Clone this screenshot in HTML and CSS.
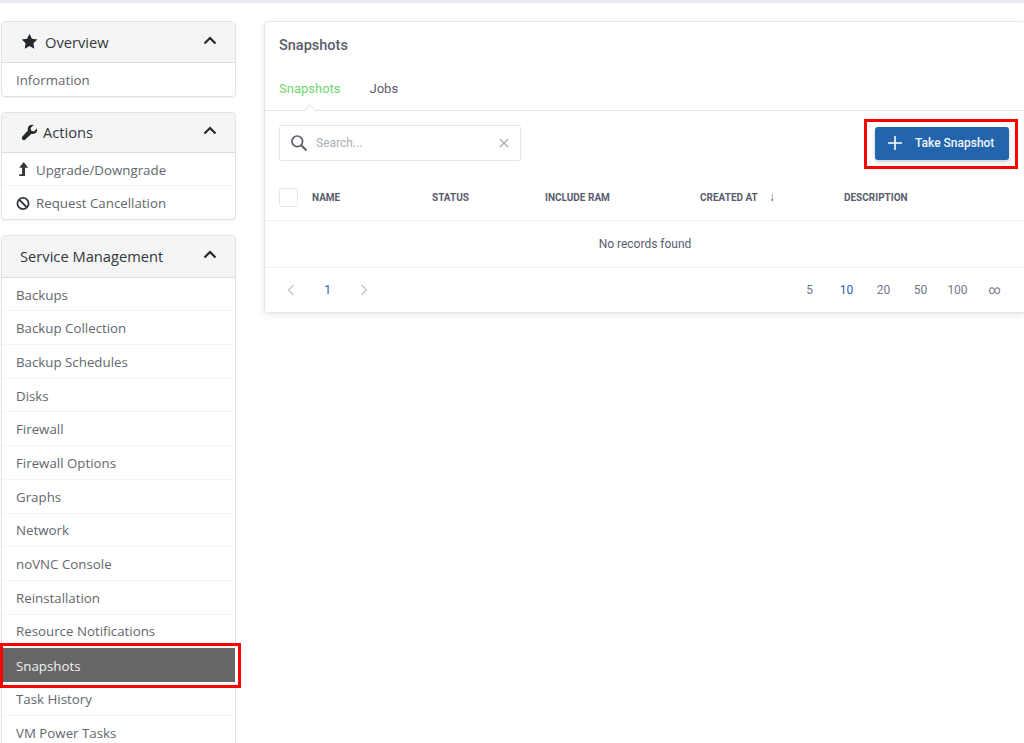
FILE: index.html
```html
<!DOCTYPE html>
<html lang="en">
<head>
  <meta charset="UTF-8" />
  <title>Snapshots</title>
  <link rel="stylesheet" href="styles.css">
</head>
<body>
  <div class="top-line"></div>
  <div class="page">
    <aside class="sidebar">
      <div class="panel">
        <div class="panel-head">
          <span class="head-title">
            <svg class="head-icon" viewBox="0 0 24 24"><path fill="#23282e" d="M12 1l3.400 7 7.600 1.100-5.500 5.400 1.300 7.600-6.800-3.600-6.800 3.600 1.300-7.600L1 9.100 8.600 8z"/></svg>
            Overview
          </span>
          <svg class="chevron" viewBox="0 0 14 9"><path d="M1.500 7.500L7 2l5.500 5.500" fill="none" stroke="#23282e" stroke-width="2.200"/></svg>
        </div>
        <a class="item">Information</a>
      </div>

      <div class="panel panel-short">
        <div class="panel-head">
          <span class="head-title head-tight">
            <svg class="head-icon" viewBox="0 0 24 24"><path fill="#23282e" d="M22.500 6.200l-4.300 4.300-3.700-1-1-3.700 4.300-4.300c-3-.9-6.300.3-7.700 3-.8 1.500-.8 3.300-.3 4.800L2 17.800c-1.200 1.200-1.200 3 0 4.200s3 1.200 4.200 0l8.500-8.300c1.500.5 3.300.5 4.800-.3 2.700-1.400 3.900-4.700 3-7.200z"/></svg>
            Actions
          </span>
          <svg class="chevron" viewBox="0 0 14 9"><path d="M1.500 7.500L7 2l5.500 5.500" fill="none" stroke="#23282e" stroke-width="2.200"/></svg>
        </div>
        <a class="item">
          <svg class="item-icon" viewBox="0 0 14 16"><path fill="#33383e" d="M7.700 0l4.800 6.200H9.200V15H3v-2h3V6.200H3z"/></svg>
          Upgrade/Downgrade
        </a>
        <a class="item">
          <svg class="item-icon" viewBox="0 0 14 14"><circle cx="7" cy="7" r="5.600" fill="none" stroke="#33383e" stroke-width="1.800"/><path d="M3 3l8 8" stroke="#33383e" stroke-width="1.800"/></svg>
          Request Cancellation
        </a>
      </div>

      <div class="panel">
        <div class="panel-head service-head">
          <span class="head-title">Service Management</span>
          <svg class="chevron" viewBox="0 0 14 9"><path d="M1.500 7.500L7 2l5.500 5.500" fill="none" stroke="#23282e" stroke-width="2.200"/></svg>
        </div>
        <a class="item">Backups</a>
        <a class="item">Backup Collection</a>
        <a class="item">Backup Schedules</a>
        <a class="item">Disks</a>
        <a class="item">Firewall</a>
        <a class="item">Firewall Options</a>
        <a class="item">Graphs</a>
        <a class="item">Network</a>
        <a class="item">noVNC Console</a>
        <a class="item">Reinstallation</a>
        <a class="item">Resource Notifications</a>
        <a class="item active">Snapshots</a>
        <a class="item">Task History</a>
        <a class="item">VM Power Tasks</a>
      </div>
    </aside>

    <main class="card">
      <div class="card-top">
        <h1 class="card-title">Snapshots</h1>
        <div class="tabs">
          <a class="tab tab-on">Snapshots</a>
          <a class="tab">Jobs</a>
        </div>
      </div>

      <div class="toolbar">
        <div class="search">
          <svg class="search-icon" viewBox="0 0 18 18"><circle cx="7.300" cy="7.300" r="5.300" fill="none" stroke="#5a6068" stroke-width="1.700"/><path d="M11.200 11.200l5.300 5.300" stroke="#5a6068" stroke-width="2"/></svg>
          <span class="search-text">Search...</span>
          <svg class="search-clear" viewBox="0 0 10 10"><path d="M1 1l8 8M9 1l-8 8" stroke="#a5a9af" stroke-width="1.100"/></svg>
        </div>
        <button class="take-btn">
          <svg class="plus" viewBox="0 0 14 14"><path d="M7 0v14M0 7h14" stroke="#fff" stroke-width="1.600"/></svg>
          Take Snapshot
        </button>
      </div>

      <div class="thead">
        <span class="check"></span>
        <span class="col col-name">NAME</span>
        <span class="col col-status">STATUS</span>
        <span class="col col-ram">INCLUDE RAM</span>
        <span class="col col-created">CREATED AT <span class="sort">↓</span></span>
        <span class="col col-desc">DESCRIPTION</span>
      </div>

      <div class="empty">No records found</div>

      <div class="pager">
        <div class="pages">
          <span class="cell"><svg class="arrow" viewBox="0 0 8 12"><path d="M7 1L2 6l5 5" fill="none" stroke="#c3c6ca" stroke-width="1.300"/></svg></span>
          <span class="cell num-on">1</span>
          <span class="cell"><svg class="arrow" viewBox="0 0 8 12"><path d="M1 1l5 5-5 5" fill="none" stroke="#c3c6ca" stroke-width="1.300"/></svg></span>
        </div>
        <div class="sizes">
          <span class="cell">5</span>
          <span class="cell num-on">10</span>
          <span class="cell">20</span>
          <span class="cell">50</span>
          <span class="cell">100</span>
          <span class="cell">∞</span>
        </div>
      </div>
    </main>
  </div>
</body>
</html>
```

FILE: styles.css
```css
html, body {
  height: 100%;
}

body {
  margin: 0;
  background: #fff;
  font-family: "Open Sans", sans-serif;
  overflow: hidden;
}

.top-line {
  height: 3px;
  background: #e9ecf2;
}

.page {
  display: flex;
  align-items: flex-start;
  padding: 18px 0 0 1px;
  gap: 28px;
}

/* sidebar */
.sidebar {
  width: 235px;
  flex-shrink: 0;
  display: flex;
  flex-direction: column;
  gap: 14.500px;
}

.panel {
  border: 1px solid #e3e3e3;
  border-radius: 4px;
  box-shadow: 0 1px 1px rgba(0, 0, 0, 0.05);
}

.panel-head {
  height: 39.500px;
  display: flex;
  align-items: center;
  justify-content: space-between;
  padding: 0 18px 0 19px;
  background: #f5f5f5;
  border-bottom: 1px solid #dddddd;
  border-radius: 3px 3px 0 0;
  color: #33383e;
  font-size: 14.700px;
}

.service-head {
  height: 41px;
  padding-left: 18px;
}

.head-title {
  display: flex;
  align-items: center;
  gap: 7px;
}

.head-tight {
  gap: 5px;
}

.head-icon {
  width: 17px;
  height: 17px;
}

.chevron {
  width: 14px;
  height: 9px;
  margin-bottom: 3px;
}

.item {
  display: flex;
  align-items: center;
  gap: 6px;
  height: 33.700px;
  padding: 1px 14px 0;
  border-bottom: 1px solid #f3f3f3;
  box-sizing: border-box;
  color: #62676d;
  font-size: 13.300px;
}

.panel-short .item {
  height: 33px;
}

.item:last-child {
  border-bottom: none;
}

.item-icon {
  width: 14px;
  height: 15px;
}

.item.active {
  position: relative;
  height: 35.700px;
  margin-right: -2px;
  margin-bottom: -2px;
  background: #666;
  color: #f2f2f2;
  border-bottom: 2px solid #fff;
  border-right: 2px solid #fff;
}

/* red annotation boxes */
.item.active::after {
  content: "";
  position: absolute;
  left: -2px;
  right: -6px;
  top: -5px;
  bottom: -6px;
  border: 3px solid #f00;
}

/* main card */
.card {
  width: 760px;
  flex-shrink: 0;
  border: 1px solid #e4e5ee;
  border-radius: 4px;
  box-shadow: 0 2px 6px rgba(60, 60, 90, 0.12);
  color: #595d6e;
  font-family: Roboto, sans-serif;
}

.card-top {
  padding: 15px 14px 0;
  border-bottom: 1px solid #e4e5ee;
}

.card-title {
  margin: 0;
  font-size: 14.500px;
  line-height: 17px;
  font-weight: 500;
  color: #595d6e;
}

.tabs {
  display: flex;
  gap: 29px;
  margin-top: 27px;
}

.tab {
  position: relative;
  padding-bottom: 14px;
  font-size: 13px;
  line-height: 15px;
  color: #595d6e;
}

.tab-on {
  color: #6fd66f;
}

.tab-on::after {
  content: "";
  position: absolute;
  left: 27px;
  bottom: -4px;
  width: 7px;
  height: 7px;
  background: #fff;
  border-left: 1px solid #e4e5ee;
  border-top: 1px solid #e4e5ee;
  transform: rotate(45deg);
}

.toolbar {
  display: flex;
  align-items: center;
  justify-content: space-between;
  padding: 14px 0 0 14px;
  height: 36px;
}

.search {
  width: 219px;
  height: 34px;
  display: flex;
  align-items: center;
  border: 1px solid #e4e5ee;
  border-radius: 3px;
  padding: 0 11px 0 10px;
  font-size: 12px;
  color: #a9adb5;
}

.search-icon {
  width: 18px;
  height: 18px;
}

.search-text {
  margin-left: 8px;
  flex: 1;
}

.search-clear {
  width: 10px;
  height: 10px;
}

.take-btn {
  position: relative;
  width: 134px;
  height: 33px;
  margin-right: 16px;
  display: flex;
  align-items: center;
  padding: 0 0 0 13px;
  gap: 13px;
  border: none;
  border-radius: 3px;
  background: #2265ad;
  box-shadow: 0 2px 4px rgba(0, 0, 0, 0.2);
  color: #f2f6fa;
  font-family: Roboto, sans-serif;
  font-size: 12px;
  font-weight: 500;
}

.take-btn::after {
  content: "";
  position: absolute;
  left: -11px;
  right: -9px;
  top: -8px;
  bottom: -9px;
  border: 3px solid #f00;
}

.plus {
  width: 14px;
  height: 14px;
}

.thead {
  display: flex;
  align-items: center;
  height: 45px;
  margin-top: 14px;
  padding-left: 14px;
  border-bottom: 1px solid #f0f1f5;
  font-size: 10px;
  line-height: 12px;
  font-weight: 700;
  color: #595d6e;
}

.check {
  width: 17px;
  height: 17px;
  border: 1px solid #e4e5ee;
  border-radius: 3px;
  flex-shrink: 0;
}

.col {
  flex-shrink: 0;
}

.col-name { margin-left: 14px; width: 120px; }
.col-status { width: 113px; }
.col-ram { width: 155px; }
.col-created { width: 144px; }
.col-desc { width: 100px; }

.sort {
  margin-left: 9px;
  font-size: 12px;
  line-height: 10px;
}

.empty {
  height: 46px;
  line-height: 47px;
  text-align: center;
  border-bottom: 1px solid #f0f1f5;
  font-size: 12px;
}

.pager {
  display: flex;
  align-items: center;
  justify-content: space-between;
  height: 44px;
  padding: 0 12px 0 7px;
  font-size: 12px;
  color: #74788d;
}

.pages,
.sizes {
  display: flex;
  align-items: center;
}

.cell {
  width: 37px;
  display: flex;
  justify-content: center;
  align-items: center;
}

.arrow {
  width: 9px;
  height: 12px;
}

.num-on {
  color: #2265ad;
}
```
